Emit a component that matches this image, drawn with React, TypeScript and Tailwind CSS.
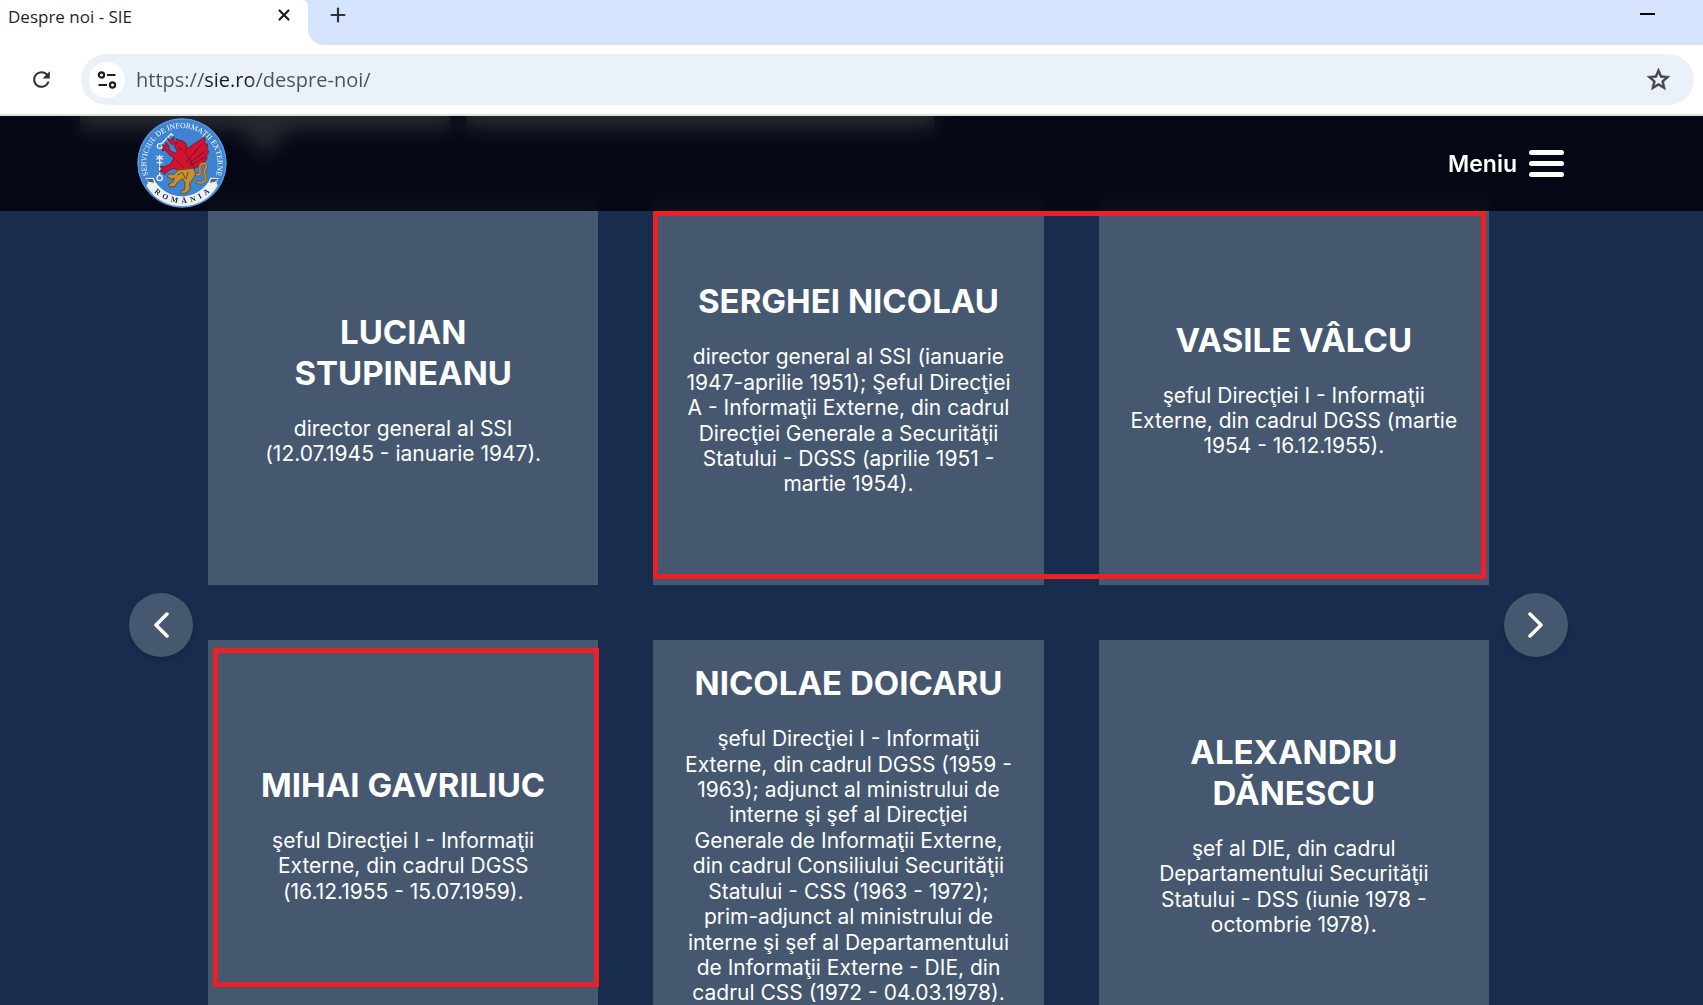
import { FunctionComponent } from 'react'
import { Plus, X } from 'lucide-react'
import { MdRefresh, MdStarBorder } from 'react-icons/md'

interface Director {
  name: string
  description: string
  mark?: 'single' | 'double'
}

const directors: Director[] = [
  {
    name: 'LUCIAN STUPINEANU',
    description: 'director general al SSI (12.07.1945 - ianuarie 1947).',
  },
  {
    name: 'SERGHEI NICOLAU',
    description:
      'director general al SSI (ianuarie 1947-aprilie 1951); Şeful Direcţiei A - Informaţii Externe, din cadrul Direcţiei Generale a Securităţii Statului - DGSS (aprilie 1951 - martie 1954).',
    mark: 'double',
  },
  {
    name: 'VASILE VÂLCU',
    description:
      'şeful Direcţiei I - Informaţii Externe, din cadrul DGSS (martie 1954 - 16.12.1955).',
  },
  {
    name: 'MIHAI GAVRILIUC',
    description:
      'şeful Direcţiei I - Informaţii Externe, din cadrul DGSS (16.12.1955 - 15.07.1959).',
    mark: 'single',
  },
  {
    name: 'NICOLAE DOICARU',
    description:
      'şeful Direcţiei I - Informaţii Externe, din cadrul DGSS (1959 - 1963); adjunct al ministrului de interne şi şef al Direcţiei Generale de Informaţii Externe, din cadrul Consiliului Securităţii Statului - CSS (1963 - 1972); prim-adjunct al ministrului de interne şi şef al Departamentului de Informaţii Externe - DIE, din cadrul CSS (1972 - 04.03.1978).',
  },
  {
    name: 'ALEXANDRU DĂNESCU',
    description:
      'şef al DIE, din cadrul Departamentului Securităţii Statului - DSS (iunie 1978 - octombrie 1978).',
  },
]

const TuneIcon = () => (
  <svg width="20" height="18" viewBox="0 0 20 18" fill="none" stroke="#1f1f1f" strokeWidth="2.2">
    <circle cx="4.5" cy="4" r="2.6" />
    <path d="M10 4h8.5M1.5 14h8.5" />
    <circle cx="15.5" cy="14" r="2.6" />
  </svg>
)

const Emblem = () => (
  <svg className="size-[90px]" viewBox="0 0 270 270" role="img" aria-label="SIE">
    <defs>
      <path id="ring" d="M42 190A107 107 0 1 1 228 190" />
      <path id="banner" d="M45 215A121 121 0 0 0 225 215" />
    </defs>
    <circle cx="135" cy="135" r="134" fill="#3f83d3" />
    <circle cx="135" cy="135" r="132" fill="none" stroke="#79a9e4" strokeWidth="2" />
    <text fill="#fff" fontFamily="Liberation Serif, serif" fontSize="23">
      <textPath href="#ring" startOffset="50%" textAnchor="middle">
        SERVICIUL DE INFORMAŢII EXTERNE
      </textPath>
    </text>
    {/* keys */}
    <g fill="none" stroke="#e5edf6" strokeWidth="4">
      <circle cx="68" cy="84" r="7" />
      <path d="M73 78 104 46M92 58l7 9M100 47l9 6" />
      <circle cx="68" cy="180" r="8" />
      <path d="M68 172V110M58 114l20 10M78 114l-20 10M59 134h18" />
    </g>
    {/* griffin */}
    <g fill="#d3122f" stroke="#5f0d22" strokeWidth="2" strokeLinejoin="round">
      <path d="M129 122Q136 98 157 87L203 57Q206 70 202 77L211 78Q214 90 208 96L214 98Q215 111 207 116L211 119Q207 132 196 135L198 140Q187 149 173 148L170 156 140 158Z" />
      <path d="M112 84 121 70 116 62 128 67Q148 69 150 86L144 101 157 120 173 154 132 163 111 151 96 157 82 170 78 162 66 161 77 152 68 145 83 146 101 137 111 119 97 111 84 96 76 99 80 88 74 80 86 83 87 73 96 83 96 95 112 105 122 102Z" />
      <path d="m98 74-7-14 11 6 8-10 2 13 8 5-13 6Z" />
    </g>
    <path
      d="M148 132 194 78M155 137l48-37M160 143l45-27M126 88l10 9M119 127l21 23"
      fill="none"
      stroke="#6f1028"
      strokeWidth="3"
    />
    {/* lion */}
    <path
      d="M174 168Q194 178 188 151 190 134 204 137 213 143 204 154L201 165Q212 178 201 190 193 198 181 193"
      fill="none"
      stroke="#78591f"
      strokeWidth="9"
      strokeLinecap="round"
    />
    <path
      d="M174 168Q194 178 188 151 190 134 204 137 213 143 204 154L201 165Q212 178 201 190 193 198 181 193"
      fill="none"
      stroke="#c79331"
      strokeWidth="5"
      strokeLinecap="round"
    />
    {/* banner */}
    <path
      d="M24 180 50 179 55 191Q83 232 135 235 187 232 215 191L220 179 246 180 238 192 242 203Q206 263 135 264 64 263 28 203L34 192Z"
      fill="#edf1f6"
    />
    <path d="m26 182 22 1 3 11-15-3M244 182l-22 1-3 11 15-3" fill="#536173" />
    <path
      d="M124 156 169 151Q181 168 168 183L157 197 160 210 151 223 137 228 130 221 143 214 144 194 137 182 119 195 115 205 99 207 94 198 107 193 113 180 103 183 92 177 94 168 112 169Z"
      fill="#c79331"
      stroke="#684d19"
      strokeWidth="3"
    />
    <path d="m137 164 8 18M153 161l-6 22M121 171l16-8" stroke="#684d19" strokeWidth="3" />
    <text fill="#17202e" fontFamily="Liberation Serif, serif" fontWeight="bold" fontSize="23">
      <textPath href="#banner" startOffset="50%" textAnchor="middle">
        {'R\u00a0\u00a0O\u00a0\u00a0M\u00a0\u00a0Â\u00a0\u00a0N\u00a0\u00a0I\u00a0\u00a0A'}
      </textPath>
    </text>
  </svg>
)

const BrowserBar = () => (
  <div className="shrink-0 border-b-2 border-[#dfe1e0] bg-white font-['Open_Sans',sans-serif]">
    <div className="flex h-[45px]">
      <div className="w-[308px] bg-[#d5e3ff]">
        <div className="flex h-full items-start justify-between rounded-tr-md bg-white pt-1 pr-[15px] pl-2">
          <span className="text-[17px] leading-[26px] text-[#1f1f1f]">Despre noi - SIE</span>
          <button aria-label="Închide fila" className="pt-0.5 text-[#1f1f1f]">
            <X size={18} strokeWidth={3} />
          </button>
        </div>
      </div>
      <div className="flex flex-1 items-start justify-between rounded-bl-2xl bg-[#d5e3ff] pr-12 pl-[19px]">
        <button aria-label="Filă nouă" className="pt-1 text-[#333]">
          <Plus size={22} strokeWidth={2.4} />
        </button>
        <button aria-label="Minimizează" className="pt-[13px]">
          <span className="block h-0.5 w-[15px] bg-black" />
        </button>
      </div>
    </div>
    <div className="flex items-center gap-[27px] py-[9px] pr-[9px] pl-[29px]">
      <button aria-label="Reîncarcă" className="text-[#333]">
        <MdRefresh size={25} />
      </button>
      <div className="flex h-[51px] flex-1 items-center rounded-full bg-[#ebf1f9] pr-[22px] pl-2">
        <button
          aria-label="Informații despre site"
          className="flex size-9 items-center justify-center rounded-full bg-white"
        >
          <TuneIcon />
        </button>
        <input
          aria-label="Adresă"
          defaultValue="https://sie.ro/despre-noi/"
          className="ml-[11px] flex-1 bg-[linear-gradient(to_right,#4b5056_68px,#1b1c1e_68px,#1b1c1e_117px,#4b5056_117px)] bg-clip-text text-[20px] leading-7 text-transparent outline-none"
        />
        <button aria-label="Marchează pagina" className="text-[#444]">
          <MdStarBorder size={27} className="[&_path:last-child]:stroke-current [&_path:last-child]:[stroke-width:0.6]" />
        </button>
      </div>
    </div>
  </div>
)

const DirectorCard: FunctionComponent<Director> = ({ name, description, mark }) => (
  <article className="relative flex aspect-square flex-col items-center justify-center gap-[22px] bg-[#455870] px-[30px] pb-0.5 text-center text-white">
    <h2 className="text-[33px] leading-[41px] font-bold">{name}</h2>
    <p className="text-[21px] leading-[1.21]">{description}</p>
    {mark === 'double' && (
      <div className="absolute top-4 bottom-[6px] left-0 z-10 w-[calc(200%+52px)] border-[5px] border-[#ec2027]" />
    )}
    {mark === 'single' && (
      <div className="absolute top-2 -right-px bottom-[44px] left-[5px] z-10 border-[5px] border-[#ec2027]" />
    )}
  </article>
)

const arrowClass =
  'mt-6 flex size-16 shrink-0 items-center justify-center rounded-full bg-[#455870] text-white shadow-md'

const App = () => {
  return (
    <div className="flex h-screen flex-col overflow-hidden font-['Inter',sans-serif]">
      <BrowserBar />
      <div className="relative flex-1 overflow-hidden bg-[#182c4d]">
        <header className="absolute inset-x-0 top-0 z-20 flex h-[95px] items-center justify-between bg-[#00020a]/85 pr-[139px] pl-[137px] backdrop-blur-[10px]">
          <a href="#acasa" className="mb-0.5">
            <Emblem />
          </a>
          <button className="flex items-center gap-3 text-[23px] leading-7 font-semibold text-white">
            Meniu
            <span className="flex flex-col gap-[6px]">
              <span className="h-[5px] w-[35px] rounded-full bg-white" />
              <span className="h-[5px] w-[35px] rounded-full bg-white" />
              <span className="h-[5px] w-[35px] rounded-full bg-white" />
            </span>
          </button>
        </header>

        {/* end of the timeline, scrolled under the header */}
        <div className="flex h-[79px] items-start gap-4 pl-20">
          <div className="flex h-[14px] w-[370px] justify-center bg-white">
            <div className="size-8 shrink-0 rotate-45 bg-white" />
          </div>
          <div className="h-[13px] w-[468px] bg-white" />
        </div>

        <main className="flex items-center gap-[15px] pr-[135px] pl-[129px]">
          <button aria-label="Înapoi" className={arrowClass}>
            <svg width="16" height="28" viewBox="0 0 16 28" fill="none" stroke="currentColor" strokeWidth="3.5" strokeLinecap="round" strokeLinejoin="round">
              <path d="M14 3 3 14l11 11" />
            </svg>
          </button>
          <div className="grid flex-1 grid-cols-3 gap-[55px]">
            {directors.map((director) => (
              <DirectorCard key={director.name} {...director} />
            ))}
          </div>
          <button aria-label="Înainte" className={arrowClass}>
            <svg width="16" height="28" viewBox="0 0 16 28" fill="none" stroke="currentColor" strokeWidth="3.5" strokeLinecap="round" strokeLinejoin="round">
              <path d="m2 3 11 11L2 25" />
            </svg>
          </button>
        </main>
      </div>
    </div>
  )
}

export default App
